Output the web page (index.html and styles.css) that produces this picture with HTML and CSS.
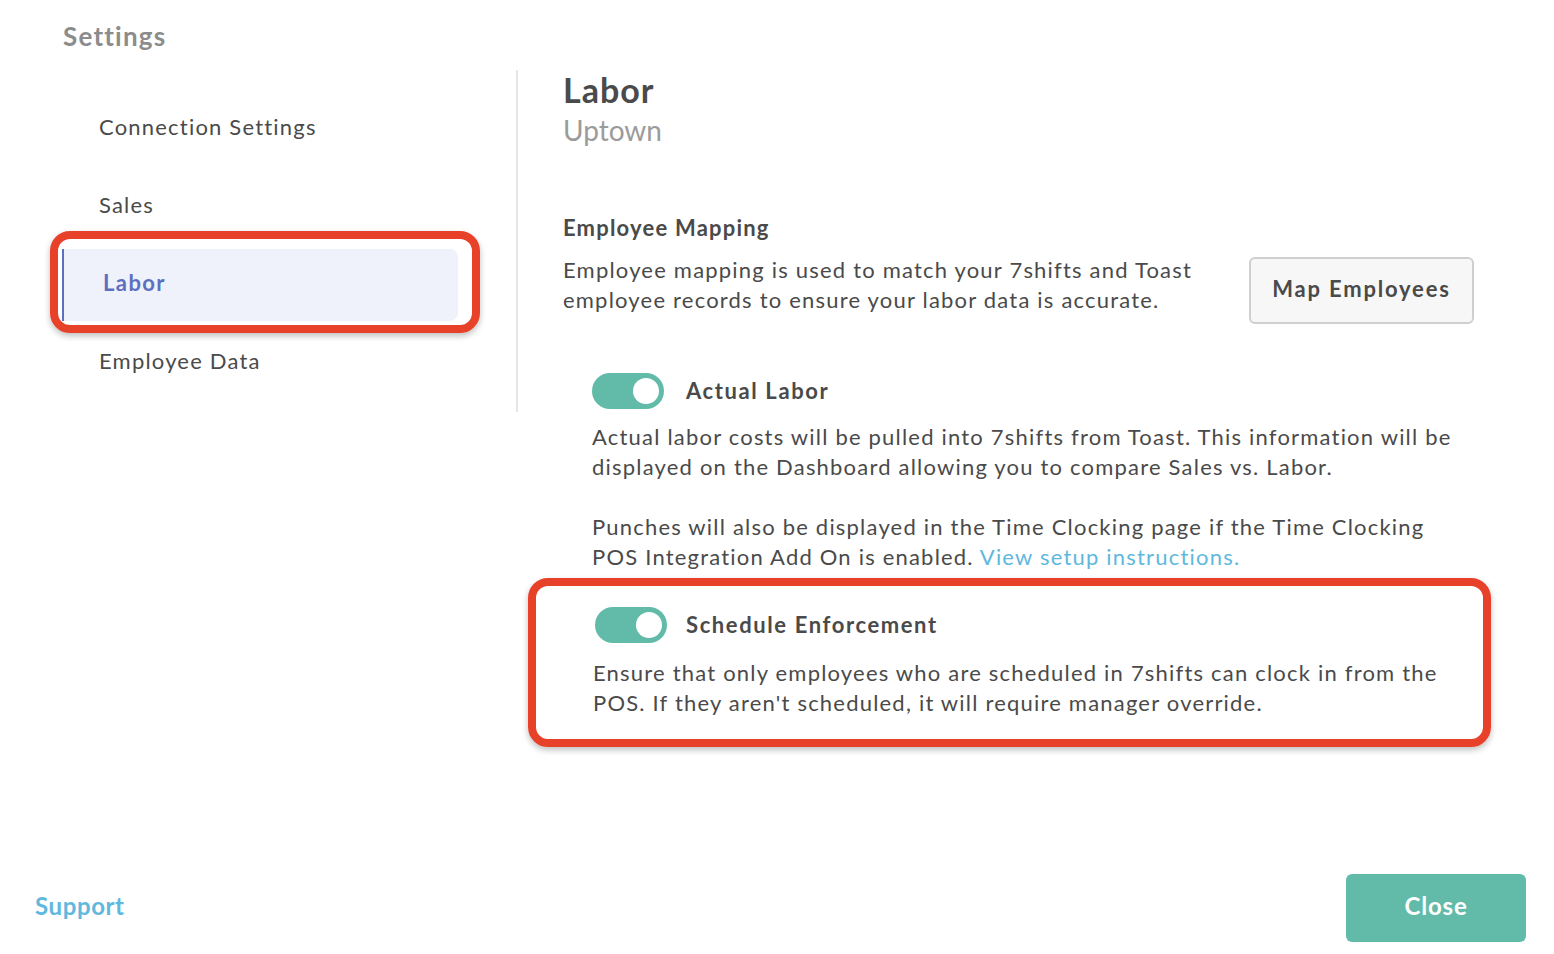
FILE: index.html
```html
<!DOCTYPE html>
<html>
<head>
<title>Settings - Labor</title>
<link rel="stylesheet" href="styles.css">
</head>
<body>
<div class="page">
    <div class="title">Settings</div>

    <div class="columns">
        <div class="sidebar">
            <ul class="nav">
                <li class="nav-item">Connection Settings</li>
                <li class="nav-item">Sales</li>
                <li class="nav-item active">Labor<span class="mark mark-nav"></span></li>
                <li class="nav-item">Employee Data</li>
            </ul>
        </div>

        <div class="main">
            <h1 class="heading">Labor</h1>
            <div class="subheading">Uptown</div>

            <h2 class="section-title">Employee Mapping</h2>
            <div class="mapping-row">
                <p class="mapping-text">Employee mapping is used to match your 7shifts and Toast employee records to ensure your labor data is accurate.</p>
                <button class="btn-map">Map Employees</button>
            </div>

            <div class="option">
                <div class="option-head">
                    <span class="toggle on"><span class="knob"></span></span>
                    <span class="option-label">Actual Labor</span>
                </div>
                <p class="option-text">Actual labor costs will be pulled into 7shifts from Toast. This information will be displayed on the Dashboard allowing you to compare Sales vs. Labor.</p>
                <p class="option-text gap">Punches will also be displayed in the Time Clocking page if the Time Clocking POS Integration Add On is enabled. <a class="link" href="#">View setup instructions.</a></p>
            </div>

            <div class="option marked">
                <div class="option-head">
                    <span class="toggle on"><span class="knob"></span></span>
                    <span class="option-label">Schedule Enforcement</span>
                </div>
                <p class="option-text">Ensure that only employees who are scheduled in 7shifts can clock in from the POS. If they aren't scheduled, it will require manager override.</p>
            </div>
        </div>
    </div>

    <div class="footer">
        <a class="support" href="#">Support</a>
        <button class="btn-close">Close</button>
    </div>
</div>
</body>
</html>
```

FILE: styles.css
```css
body {
    margin: 0;
    font-family: Lato, "Open Sans", sans-serif;
    color: #4a4a4a;
    background: #fff;
    letter-spacing: 1.2px;
}

.page {
    height: 954px;
    display: flex;
    flex-direction: column;
}

.title {
    padding: 21px 0 0 63px;
    font-size: 26px;
    line-height: 30px;
    font-weight: 700;
    color: #8c8c8c;
    letter-spacing: 1.2px;
}

.columns {
    display: flex;
    margin-top: 19px;
}

/* left menu */
.sidebar {
    width: 516px;
    border-right: 2px solid #e6e6e6;
    align-self: flex-start;
}

.nav {
    list-style: none;
    margin: 0;
    padding: 23px 0 13px 0;
    display: flex;
    flex-direction: column;
    gap: 6px;
}

.nav-item {
    position: relative;
    margin-left: 62px;
    width: 396px;
    height: 72px;
    box-sizing: border-box;
    padding: 0 0 5px 37px;
    display: flex;
    align-items: center;
    font-size: 22px;
}

.nav-item.active {
    background: #eff2fa;
    border-left: 2px solid #5b70c0;
    border-radius: 0 8px 8px 0;
    padding-left: 39px;
    color: #5b70c0;
    font-weight: 700;
    letter-spacing: 1.4px;
}

.mark {
    position: absolute;
    border: 8px solid #e8412a;
    border-radius: 20px;
    box-shadow: 0 3px 6px rgba(0, 0, 0, 0.25);
    pointer-events: none;
}

.mark-nav {
    left: -14px;
    top: -18px;
    right: -22px;
    bottom: -12px;
}

/* right content */
.main {
    padding-left: 45px;
    width: 911px;
}

.heading {
    margin: 0;
    font-size: 34px;
    line-height: 40px;
    font-weight: 700;
    letter-spacing: 1px;
}

.subheading {
    font-size: 28px;
    line-height: 40px;
    color: #9b9b9b;
    letter-spacing: 0;
}

.section-title {
    margin: 63px 0 0 0;
    font-size: 22px;
    line-height: 30px;
    font-weight: 700;
    letter-spacing: 1.2px;
}

.mapping-row {
    display: flex;
    justify-content: space-between;
    align-items: flex-start;
    margin-top: 12px;
}

.mapping-text {
    margin: 0;
    width: 670px;
    font-size: 22px;
    line-height: 30px;
}

.btn-map {
    width: 225px;
    height: 67px;
    background: #f7f7f7;
    border: 2px solid #cfcfcf;
    border-radius: 6px;
    padding: 0 0 4px 0;
    font-family: inherit;
    font-size: 22px;
    font-weight: 700;
    letter-spacing: 1.8px;
    color: #4a4a4a;
    margin-top: 2px;
}

.option {
    margin-top: 49px;
    padding-left: 29px;
}

.option-head {
    display: flex;
    align-items: center;
    gap: 22px;
}

.toggle {
    display: inline-block;
    position: relative;
    width: 72px;
    height: 36px;
    border-radius: 18px;
    background: #62bba8;
}

.knob {
    position: absolute;
    right: 5px;
    top: 5px;
    width: 26px;
    height: 26px;
    border-radius: 50%;
    background: #fff;
}

.option-label {
    font-size: 22px;
    font-weight: 700;
    letter-spacing: 1.6px;
    padding-bottom: 2px;
}

.option-text {
    margin: 13px 0 0 0;
    font-size: 22px;
    line-height: 30px;
}

.option-text.gap {
    margin-top: 30px;
}

.link {
    color: #5fb8dd;
    text-decoration: none;
}

.option.marked {
    margin: 6px -17px 0 -35px;
    padding: 21px 0 21px 57px;
    border: 8px solid #e8412a;
    border-radius: 20px;
    box-shadow: 0 3px 6px rgba(0, 0, 0, 0.25);
}

.option.marked .toggle {
    margin-left: 2px;
}

.option.marked .option-head {
    gap: 19px;
}

.option.marked .option-text {
    margin-top: 15px;
}

/* bottom bar */
.footer {
    margin-top: auto;
    display: flex;
    justify-content: space-between;
    align-items: center;
    padding: 0 28px 12px 35px;
}

.support {
    font-size: 24px;
    font-weight: 700;
    letter-spacing: 0.6px;
    color: #5fb8dd;
    text-decoration: none;
    margin-bottom: 6px;
}

.btn-close {
    width: 180px;
    height: 68px;
    background: #62bba8;
    border: none;
    border-radius: 6px;
    padding: 0 0 6px 0;
    color: #fff;
    font-family: inherit;
    font-size: 24px;
    font-weight: 700;
    letter-spacing: 0.8px;
}
```
